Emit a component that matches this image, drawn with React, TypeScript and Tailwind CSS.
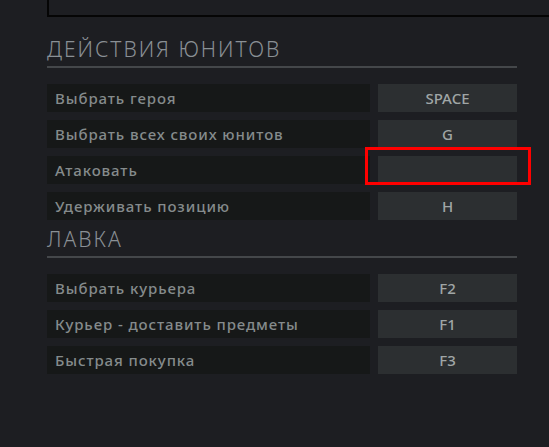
import React from 'react';

type Bind = { label: string; key: string; marked?: boolean };

const unitBinds: Bind[] = [
  { label: 'Выбрать героя', key: 'SPACE' },
  { label: 'Выбрать всех своих юнитов', key: 'G' },
  { label: 'Атаковать', key: '', marked: true },
  { label: 'Удерживать позицию', key: 'H' },
];

const shopBinds: Bind[] = [
  { label: 'Выбрать курьера', key: 'F2' },
  { label: 'Курьер - доставить предметы', key: 'F1' },
  { label: 'Быстрая покупка', key: 'F3' },
];

const Row: React.FC<{ bind: Bind }> = ({ bind }) => (
  <div className="flex h-[28px] gap-2">
    <div className="flex flex-1 items-center bg-[#161818] pl-2 text-[15px] font-medium tracking-[0.9px] text-[#858b8c]">
      {bind.label}
    </div>
    <div className="relative flex w-[139px] items-center justify-center bg-[#2c2f31] text-[15px] font-medium text-[#a0a6a6]">
      {bind.key}
      {bind.marked && (
        <div className="absolute -left-[13px] -top-[9px] h-[38px] w-[166px] border-[3px] border-[#ff0000]" />
      )}
    </div>
  </div>
);

const Heading: React.FC<{ title: string; className?: string }> = ({ title, className }) => (
  <div
    className={`border-b-2 border-[#44474a] pb-[3px] text-[21px] font-light leading-[28px] tracking-[2px] text-[#8a9095] ${className ?? ''}`}
  >
    {title}
  </div>
);

const App: React.FC = () => {
  return (
    <div
      className="h-[447px] w-full overflow-hidden bg-[#1d1e22] pl-[47px] pr-[32px]"
      style={{ fontFamily: '"Noto Sans", "Open Sans", sans-serif' }}
    >
      <div className="-mr-[60px] h-[17px] border-b-2 border-l-2 border-[#050505]" />

      <Heading title="ДЕЙСТВИЯ ЮНИТОВ" className="mt-[18px]" />
      <div className="mt-[16px] flex flex-col gap-2">
        {unitBinds.map((b) => (
          <Row key={b.label} bind={b} />
        ))}
      </div>

      <Heading title="ЛАВКА" className="mt-[5px]" />
      <div className="mt-[16px] flex flex-col gap-2">
        {shopBinds.map((b) => (
          <Row key={b.label} bind={b} />
        ))}
      </div>
    </div>
  );
};

export default App;
